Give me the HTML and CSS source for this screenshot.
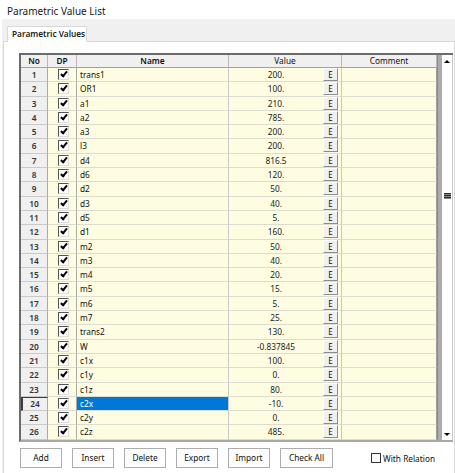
FILE: index.html
```html
<!DOCTYPE html>
<html>
<head>
<meta charset="utf-8">
<link rel="stylesheet" href="styles.css">
</head>
<body>
<div class="title">Parametric Value List</div>
<div class="frame">
  <div class="tabs"><div class="tab">Parametric Values</div></div>
  <div class="panel">
    <div class="table-frame">
      <div class="table">
        <div class="row head">
          <div class="h b">No</div>
          <div class="h b">DP</div>
          <div class="h b">Name</div>
          <div class="h">Value</div>
          <div class="h last">Comment</div>
        </div>
        <div class="row"><div class="no">1</div><div class="dp"><span class="cb"></span></div><div class="nm">trans1</div><div class="val"><span class="v">200.</span><span class="e">E</span></div><div class="cm"></div></div>
        <div class="row"><div class="no">2</div><div class="dp"><span class="cb"></span></div><div class="nm">OR1</div><div class="val"><span class="v">100.</span><span class="e">E</span></div><div class="cm"></div></div>
        <div class="row"><div class="no">3</div><div class="dp"><span class="cb"></span></div><div class="nm">a1</div><div class="val"><span class="v">210.</span><span class="e">E</span></div><div class="cm"></div></div>
        <div class="row"><div class="no">4</div><div class="dp"><span class="cb"></span></div><div class="nm">a2</div><div class="val"><span class="v">785.</span><span class="e">E</span></div><div class="cm"></div></div>
        <div class="row"><div class="no">5</div><div class="dp"><span class="cb"></span></div><div class="nm">a3</div><div class="val"><span class="v">200.</span><span class="e">E</span></div><div class="cm"></div></div>
        <div class="row"><div class="no">6</div><div class="dp"><span class="cb"></span></div><div class="nm">l3</div><div class="val"><span class="v">200.</span><span class="e">E</span></div><div class="cm"></div></div>
        <div class="row"><div class="no">7</div><div class="dp"><span class="cb"></span></div><div class="nm">d4</div><div class="val"><span class="v">816.5</span><span class="e">E</span></div><div class="cm"></div></div>
        <div class="row"><div class="no">8</div><div class="dp"><span class="cb"></span></div><div class="nm">d6</div><div class="val"><span class="v">120.</span><span class="e">E</span></div><div class="cm"></div></div>
        <div class="row"><div class="no">9</div><div class="dp"><span class="cb"></span></div><div class="nm">d2</div><div class="val"><span class="v">50.</span><span class="e">E</span></div><div class="cm"></div></div>
        <div class="row"><div class="no">10</div><div class="dp"><span class="cb"></span></div><div class="nm">d3</div><div class="val"><span class="v">40.</span><span class="e">E</span></div><div class="cm"></div></div>
        <div class="row"><div class="no">11</div><div class="dp"><span class="cb"></span></div><div class="nm">d5</div><div class="val"><span class="v">5.</span><span class="e">E</span></div><div class="cm"></div></div>
        <div class="row"><div class="no">12</div><div class="dp"><span class="cb"></span></div><div class="nm">d1</div><div class="val"><span class="v">160.</span><span class="e">E</span></div><div class="cm"></div></div>
        <div class="row"><div class="no">13</div><div class="dp"><span class="cb"></span></div><div class="nm">m2</div><div class="val"><span class="v">50.</span><span class="e">E</span></div><div class="cm"></div></div>
        <div class="row"><div class="no">14</div><div class="dp"><span class="cb"></span></div><div class="nm">m3</div><div class="val"><span class="v">40.</span><span class="e">E</span></div><div class="cm"></div></div>
        <div class="row"><div class="no">15</div><div class="dp"><span class="cb"></span></div><div class="nm">m4</div><div class="val"><span class="v">20.</span><span class="e">E</span></div><div class="cm"></div></div>
        <div class="row"><div class="no">16</div><div class="dp"><span class="cb"></span></div><div class="nm">m5</div><div class="val"><span class="v">15.</span><span class="e">E</span></div><div class="cm"></div></div>
        <div class="row"><div class="no">17</div><div class="dp"><span class="cb"></span></div><div class="nm">m6</div><div class="val"><span class="v">5.</span><span class="e">E</span></div><div class="cm"></div></div>
        <div class="row"><div class="no">18</div><div class="dp"><span class="cb"></span></div><div class="nm">m7</div><div class="val"><span class="v">25.</span><span class="e">E</span></div><div class="cm"></div></div>
        <div class="row"><div class="no">19</div><div class="dp"><span class="cb"></span></div><div class="nm">trans2</div><div class="val"><span class="v">130.</span><span class="e">E</span></div><div class="cm"></div></div>
        <div class="row"><div class="no">20</div><div class="dp"><span class="cb"></span></div><div class="nm">W</div><div class="val"><span class="v">-0.837845</span><span class="e">E</span></div><div class="cm"></div></div>
        <div class="row"><div class="no">21</div><div class="dp"><span class="cb"></span></div><div class="nm">c1x</div><div class="val"><span class="v">100.</span><span class="e">E</span></div><div class="cm"></div></div>
        <div class="row"><div class="no">22</div><div class="dp"><span class="cb"></span></div><div class="nm">c1y</div><div class="val"><span class="v">0.</span><span class="e">E</span></div><div class="cm"></div></div>
        <div class="row"><div class="no">23</div><div class="dp"><span class="cb"></span></div><div class="nm">c1z</div><div class="val"><span class="v">80.</span><span class="e">E</span></div><div class="cm"></div></div>
        <div class="row cur"><div class="no">24</div><div class="dp"><span class="cb"></span></div><div class="nm sel">c2x</div><div class="val"><span class="v">-10.</span><span class="e">E</span></div><div class="cm"></div></div>
        <div class="row"><div class="no">25</div><div class="dp"><span class="cb"></span></div><div class="nm">c2y</div><div class="val"><span class="v">0.</span><span class="e">E</span></div><div class="cm"></div></div>
        <div class="row"><div class="no">26</div><div class="dp"><span class="cb"></span></div><div class="nm">c2z</div><div class="val"><span class="v">485.</span><span class="e">E</span></div><div class="cm"></div></div>
      </div>
      <div class="vsep"></div>
      <div class="scroll">
        <div class="arrow up"></div>
        <div class="track"><div class="thumb"></div></div>
        <div class="arrow down"></div>
      </div>
    </div>
    <div class="buttons">
      <div class="btn w42">Add</div>
      <div class="btn w42">Insert</div>
      <div class="btn w42">Delete</div>
      <div class="btn w42">Export</div>
      <div class="btn w42">Import</div>
      <div class="btn w53">Check All</div>
      <label class="relation"><span class="rbox"></span>With Relation</label>
    </div>
  </div>
</div>
</body>
</html>
```
FILE: styles.css
```css
html, body {
  margin: 0;
  padding: 0;
  background: #ffffff;
  font-family: "Noto Sans", "Open Sans", sans-serif;
  color: #000;
  width: 455px;
  height: 473px;
  overflow: hidden;
}
.title {
  height: 19px;
  box-sizing: border-box;
  padding: 4px 0 0 7px;
  font-size: 10px;
  line-height: 14px;
  color: #1a1a1a;
}
.frame {
  margin-left: 2px;
  background: #f0f0f0;
  padding-left: 1px;
  height: 454px;
}
.tabs {
  height: 22px;
  box-sizing: border-box;
  padding: 7px 0 0 4px;
  display: flex;
  align-items: flex-end;
}
.tab {
  width: 80px;
  height: 16px;
  box-sizing: border-box;
  background: #fff;
  border: 1px solid #d9d9d9;
  border-bottom: none;
  font-size: 8.3px;
  line-height: 14px;
  padding-left: 4px;
  position: relative;
  z-index: 1;
  margin-bottom: -1px;
  font-weight: 600;
  color: #222;
}
.panel {
  background: #fff;
  border-top: 1px solid #d9d9d9;
  border-left: 1px solid #d9d9d9;
  border-right: 1px solid #d9d9d9;
  height: 432px;
  box-sizing: border-box;
  padding: 11px 0 0 15px;
}
.table-frame {
  display: flex;
  width: 434px;
  height: 389px;
  box-sizing: border-box;
  border-top: 2px solid #6b6b6b;
  border-left: 2px solid #6b6b6b;
  border-bottom: 2px solid #a8a8a8;
}
.table {
  width: 416px;
  overflow: hidden;
  background: #fefde2;
}
.row {
  display: grid;
  grid-template-columns: 27px 29px 152px 113px 95px;
  height: 14.3px;
  font-size: 8.3px;
}
.row > div {
  box-sizing: border-box;
  border-bottom: 1px solid #dcdcd0;
  line-height: 13px;
  overflow: hidden;
  white-space: nowrap;
}
.row.head {
  height: 13px;
}
.head .h {
  background: #f0f0f0;
  border-right: 1px solid #b9b9b9;
  border-bottom: 1px solid #a0a0a0;
  text-align: center;
  line-height: 12px;
  color: #111;
}
.head .h.b { font-weight: 600; }
.no {
  background: #f0f0f0;
  border-right: 1px solid #a9a9a9;
  border-bottom: 1px solid #c9c9c9 !important;
  text-align: center;
  font-weight: 600;
  color: #333;
}
.dp {
  border-right: 1px solid #a9a9a9;
  display: flex;
  justify-content: center;
  padding-left: 3px;
}
.cb {
  width: 11px;
  height: 11px;
  margin-top: 1px;
  box-sizing: border-box;
  background: #fff;
  border-top: 1px solid #555;
  border-left: 1px solid #555;
  border-right: 1px solid #ddd;
  border-bottom: 1px solid #ddd;
  display: flex;
  align-items: center;
  justify-content: center;
}
.cb::after {
  content: "";
  width: 2px;
  height: 5px;
  border-right: 2px solid #000;
  border-bottom: 2px solid #000;
  transform: translate(0, -1px) rotate(40deg);
}
.nm {
  padding-left: 3px;
  border-right: 1px solid #c8c8c8;
  color: #111;
}
.nm.sel {
  background: #0078d7;
  color: #fff;
}
.val {
  display: flex;
  border-right: 1px solid #c8c8c8;
}
.v {
  width: 94px;
  text-align: center;
  color: #222;
}
.e {
  width: 15px;
  height: 13px;
  box-sizing: border-box;
  background: #f0f0f0;
  border-top: 1px solid #fff;
  border-left: 1px solid #fff;
  border-right: 1px solid #8c8c8c;
  border-bottom: 1px solid #8c8c8c;
  text-align: center;
  line-height: 11px;
  font-size: 8px;
  color: #111;
}
.cm {
  border-right: 1px solid #9a9a9a;
}
.cur .no {
  border-left: 2px solid #3c3c3c;
  border-top: 1px solid #3c3c3c;
  line-height: 12px;
}
.vsep {
  width: 5px;
  background: #ababab;
  border-left: 1px solid #8c8c8c;
  box-sizing: border-box;
}
.scroll {
  width: 11px;
  background: #fff;
  border-right: 1px solid #c8c8c8;
  box-sizing: border-box;
  display: flex;
  flex-direction: column;
}
.arrow {
  height: 12px;
  display: flex;
  align-items: center;
  justify-content: center;
}
.arrow.up::before {
  content: "";
  border-left: 3px solid transparent;
  border-right: 3px solid transparent;
  border-bottom: 3px solid #000;
}
.arrow.down::before {
  content: "";
  border-left: 3px solid transparent;
  border-right: 3px solid transparent;
  border-top: 3px solid #000;
}
.track {
  flex: 1;
  display: flex;
  flex-direction: column;
  align-items: center;
  padding-top: 126px;
}
.thumb {
  width: 7px;
  height: 6px;
  background: repeating-linear-gradient(#2a2a2a 0 1px, #8a8a8a 1px 2px);
}
.buttons {
  display: flex;
  align-items: center;
  gap: 10px;
  margin-top: 6px;
  padding-left: 1px;
}
.btn {
  height: 20px;
  box-sizing: border-box;
  border: 1px solid #adadad;
  background: #fdfdfd;
  font-size: 8.3px;
  line-height: 18px;
  text-align: center;
  color: #111;
}
.w42 { width: 42px; }
.w53 { width: 53px; }
.relation {
  display: flex;
  align-items: center;
  margin-left: 28px;
  font-size: 8.3px;
  color: #111;
}
.rbox {
  width: 10px;
  height: 10px;
  box-sizing: border-box;
  border: 1px solid #333;
  background: #fff;
  margin-right: 2px;
}
```
